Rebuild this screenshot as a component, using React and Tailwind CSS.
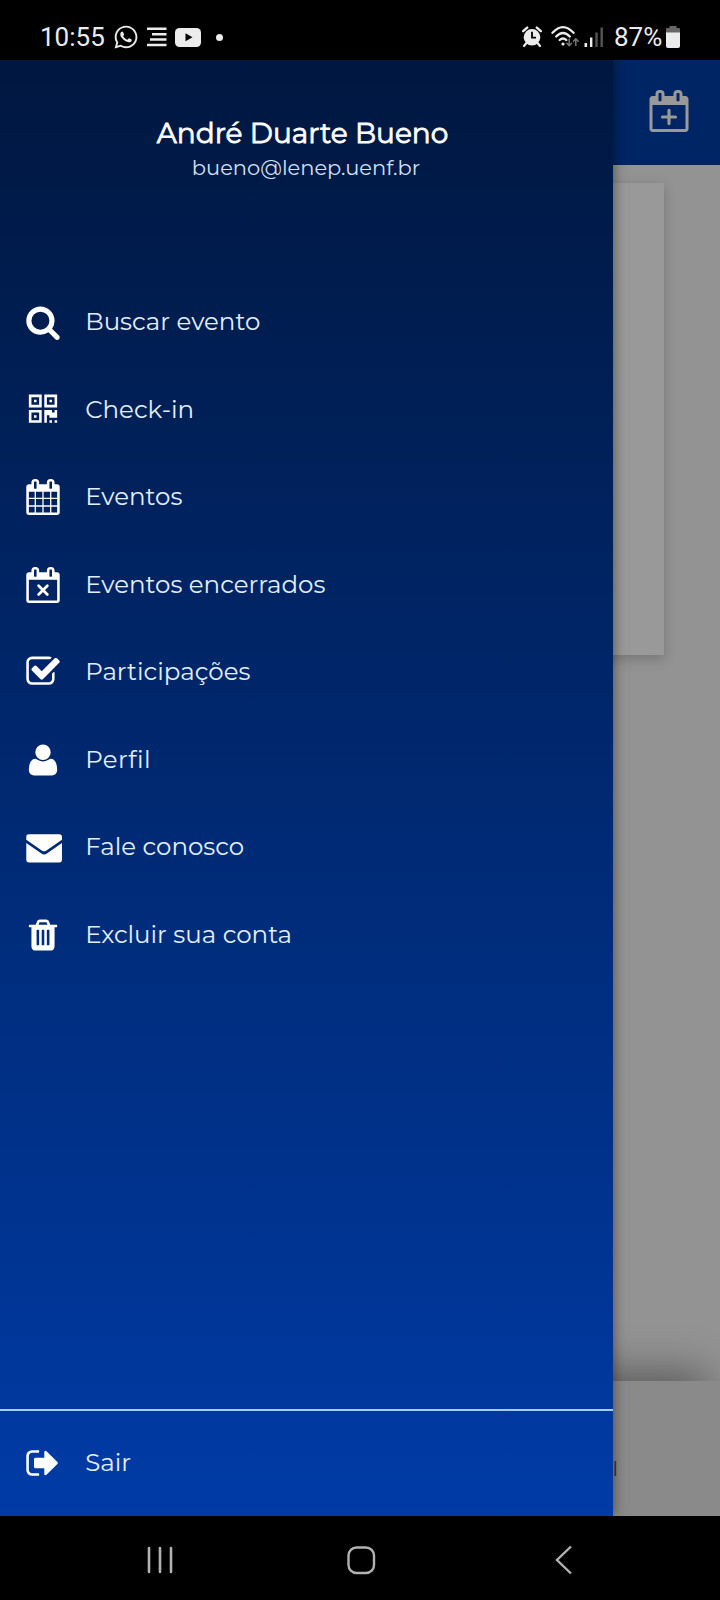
import React from "react";
import { FaWhatsapp } from "react-icons/fa";

const CALENDAR_TABS =
  "M576 448v-288q0-14-9-23t-23-9h-64q-14 0-23 9t-9 23v288q0 14 9 23t23 9h64q14 0 23-9t9-23zm768 0v-288q0-14-9-23t-23-9h-64q-14 0-23 9t-9 23v288q0 14 9 23t23 9h64q14 0 23-9t9-23z";
const CALENDAR_OUTER =
  "M1728 384v1280q0 52-38 90t-90 38h-1408q-52 0-90-38t-38-90v-1280q0-52 38-90t90-38h128v-96q0-66 47-113t113-47h64q66 0 113 47t47 113v96h384v-96q0-66 47-113t113-47h64q66 0 113 47t47 113v96h128q52 0 90 38t38 90z";
const CALENDAR_BODY = "M192 1664h1408v-1024h-1408z";
const CALENDAR_CELLS =
  "M192 640h288v288h-288zM544 640h320v288h-320zM928 640h320v288h-320zM1312 640h288v288h-288zM192 992h288v320h-288zM544 992h320v320h-320zM928 992h320v320h-320zM1312 992h288v320h-288zM192 1376h288v288h-288zM544 1376h320v288h-320zM928 1376h320v288h-320zM1312 1376h288v288h-288z";

const PATHS = {
  search:
    "M1216 832q0-185-131.5-316.5t-316.5-131.5-316.5 131.5-131.5 316.5 131.5 316.5 316.5 131.5 316.5-131.5 131.5-316.5zm512 832q0 52-38 90t-90 38q-54 0-90-38l-343-342q-179 124-399 124-143 0-273.5-55.5t-225-150-150-225-55.5-273.5 55.5-273.5 150-225 225-150 273.5-55.5 273.5 55.5 225 150 150 225 55.5 273.5q0 220-124 399l343 343q37 37 37 90z",
  qrcode:
    "M576 1152v128h-128v-128h128zm0-768v128h-128v-128h128zm768 0v128h-128v-128h128zm-1024 1023h384v-383h-384v383zm0-767h384v-384h-384v384zm768 0h384v-384h-384v384zm-256 256v640h-640v-640h640zm512 512v128h-128v-128h128zm256 0v128h-128v-128h128zm0-512v384h-384v-128h-128v384h-128v-640h384v128h128v-128h128zm-768-768v640h-640v-640h640zm768 0v640h-640v-640h640z",
  calendar: CALENDAR_OUTER + CALENDAR_CELLS + CALENDAR_TABS,
  calendarFrame: CALENDAR_OUTER + CALENDAR_BODY + CALENDAR_TABS,
  check:
    "M1472 930v318q0 119-84.5 203.5t-203.5 84.5h-832q-119 0-203.5-84.5t-84.5-203.5v-832q0-119 84.5-203.5t203.5-84.5h832q63 0 117 25 15 7 18 23 3 17-9 29l-49 49q-10 10-23 10-3 0-9-2-23-6-45-6h-832q-66 0-113 47t-47 113v832q0 66 47 113t113 47h832q66 0 113-47t47-113v-254q0-13 9-22l64-64q10-10 23-10 6 0 12 3 20 8 20 29zm231-489l-814 814q-24 24-57 24t-57-24l-430-430q-24-24-24-57t24-57l110-110q24-24 57-24t57 24l263 263 647-647q24-24 57-24t57 24l110 110q24 24 24 57t-24 57z",
  user:
    "M1600 1405q0 120-73 189.5t-194 69.5h-874q-121 0-194-69.5t-73-189.5q0-53 3.5-103.5t14-109 26.5-108.5 43-97.5 62-81 85.5-53.5 111.5-20q9 0 42 21.5t74.5 48 108 48 133.5 21.5 133.5-21.5 108-48 74.5-48 42-21.5q61 0 111.5 20t85.5 53.5 62 81 43 97.5 26.5 108.5 14 109 3.5 103.5zm-320-893q0 159-112.5 271.5t-271.5 112.5-271.5-112.5-112.5-271.5 112.5-271.5 271.5-112.5 271.5 112.5 112.5 271.5z",
  envelope:
    "M64 700L820 1225Q950 1315 1090 1225L1840 700V1536Q1840 1664 1712 1664H192Q64 1664 64 1536zM192 256H1712Q1840 256 1840 384V540L1050 1080Q950 1145 850 1080L64 540V384Q64 256 192 256z",
  trash:
    "M704 1376v-704q0-14-9-23t-23-9h-64q-14 0-23 9t-9 23v704q0 14 9 23t23 9h64q14 0 23-9t9-23zm256 0v-704q0-14-9-23t-23-9h-64q-14 0-23 9t-9 23v704q0 14 9 23t23 9h64q14 0 23-9t9-23zm256 0v-704q0-14-9-23t-23-9h-64q-14 0-23 9t-9 23v704q0 14 9 23t23 9h64q14 0 23-9t9-23zm-544-992h448l-48-117q-7-9-17-11h-317q-10 2-17 11zm928 32v64q0 14-9 23t-23 9h-96v948q0 83-47 143.5t-113 60.5h-832q-66 0-113-58.5t-47-141.5v-952h-96q-14 0-23-9t-9-23v-64q0-14 9-23t23-9h309l70-167q15-37 54-63t79-26h320q40 0 79 26t54 63l70 167h309q14 0 23 9t9 23z",
  signOut:
    "M704 1440q0 4 1 20t.5 26.5-3 23.5-10 19.5-20.5 6.5h-320q-119 0-203.5-84.5t-84.5-203.5v-704q0-119 84.5-203.5t203.5-84.5h320q13 0 22.5 9.5t9.5 22.5q0 4 1 20t.5 26.5-3 23.5-10 19.5-20.5 6.5h-320q-66 0-113 47t-47 113v704q0 66 47 113t113 47h312l11.5 1 11.5 3 8 5.5 7 9 2 13.5zm928-544q0 26-19 45l-544 544q-19 19-45 19t-45-19-19-45v-288h-448q-26 0-45-19t-19-45v-384q0-26 19-45t45-19h448v-288q0-26 19-45t45-19 45 19l544 544q19 19 19 45z",
};

function Icon({ d, mark, className = "size-9" }) {
  return (
    <svg viewBox="0 0 1792 1792" className={`shrink-0 overflow-visible ${className}`} fill="currentColor">
      <path d={d} fillRule="evenodd" />
      {mark && <path d={mark} fill="none" stroke="currentColor" strokeWidth="135" strokeLinecap="round" />}
    </svg>
  );
}

const ITEMS = [
  { label: "Buscar evento", icon: PATHS.search, cls: "h-[88px]" },
  { label: "Check-in", icon: PATHS.qrcode, cls: "h-[87px]" },
  { label: "Eventos", icon: PATHS.calendar, cls: "h-[88px]" },
  { label: "Eventos encerrados", icon: PATHS.calendarFrame, mark: "M678 936l436 436M1114 936l-436 436", cls: "h-[87px]" },
  { label: "Participações", icon: PATHS.check, cls: "h-[88px]" },
  { label: "Perfil", icon: PATHS.user, cls: "h-[87px] tracking-[0.4px]" },
  { label: "Fale conosco", icon: PATHS.envelope, cls: "h-[88px]" },
  { label: "Excluir sua conta", icon: PATHS.trash, cls: "h-[87px]" },
];

function MenuItem({ label, icon, mark, cls }) {
  return (
    <button className={`flex w-full items-start pt-[24px] pl-[25px] text-left ${cls}`}>
      <Icon d={icon} mark={mark} />
      <span className="ml-[24.2px] text-[24.5px] leading-[35px] text-[#e2effc]">{label}</span>
    </button>
  );
}

function StatusBar() {
  return (
    <header className="flex h-[60px] shrink-0 items-start bg-black pt-[22px] pl-[40px] font-[Roboto,sans-serif] text-[#ececec]">
      <span className="w-[73px] text-[26px] leading-[31px]">10:55</span>
      <FaWhatsapp className="mt-[2px] size-[26px]" />
      <svg className="mt-[5px] ml-[7px] h-5 w-[21px]" viewBox="0 0 21 20" fill="currentColor">
        <path d="M1 0.5h19.5v2.6H1zM6 6h14.5v2.5H6zM4 11.3h16.5v2.5H4zM1 16.7h19.5v2.6H1z" />
      </svg>
      <svg className="mt-[6px] ml-[8px] h-[19px] w-[26px]" viewBox="0 0 26 19">
        <rect width="26" height="19" rx="4.5" fill="#ececec" />
        <path d="M10.5 5.2v8l7-4z" fill="#000" />
      </svg>
      <span className="mt-3 ml-[15px] size-[7px] rounded-full bg-[#ececec]" />
      <div className="ml-auto flex items-start pr-[40px]">
        <svg className="mt-[4px] h-[22px] w-[20px]" viewBox="0 0 20 22" fill="none" stroke="#ececec">
          <circle cx="10" cy="11.3" r="8.3" fill="#ececec" stroke="none" />
          <path d="M1.2 5.2L5.2 1.6M18.8 5.2L14.8 1.6" strokeWidth="2.4" strokeLinecap="round" />
          <path d="M4 17.5L2 20M16 17.5L18 20" strokeWidth="2.2" strokeLinecap="round" />
          <path d="M10 5.8V11.6H14" stroke="#000" strokeWidth="1.8" />
        </svg>
        <svg className="mt-[3px] ml-[9px] h-[24px] w-[28px]" viewBox="0 0 28 24" fill="none" stroke="#ececec" strokeWidth="2.3" strokeLinecap="round">
          <path d="M1.5 7.8Q12 -3.5 22.5 7.8M5.2 11.5Q12 4.5 18.8 11.5M8.7 15Q12 12 15.3 15" />
          <circle cx="12" cy="19" r="1.6" fill="#ececec" stroke="none" />
          <path d="M18.2 14v6.5M15.8 18.2l2.4 2.4 2.4-2.4M24.8 20.5V14M22.4 16.2l2.4-2.4 2.4 2.4" stroke="#777" strokeWidth="1.5" />
        </svg>
        <svg className="mt-[5px] ml-[5px] h-5 w-[20px]" viewBox="0 0 20 20">
          <path d="M0.5 16h2.6v4H0.5zM6 10.5h2.4v9.5H6z" fill="#ececec" />
          <path d="M11.3 5.5h2.4V20h-2.4zM16.5 0.5h2.4V20h-2.4z" fill="#555" />
        </svg>
        <span className="ml-[10px] w-[52px] text-[26px] leading-[31px]">87%</span>
        <svg className="mt-[4px] h-[22px] w-[14px]" viewBox="0 0 14 22">
          <path d="M3.5 0h7v2H13a1 1 0 0 1 1 1v4H0V3a1 1 0 0 1 1-1h2.500z" fill="#666" />
          <path d="M0 6.500h14V20a2 2 0 0 1-2 2H2a2 2 0 0 1-2-2z" fill="#ececec" />
        </svg>
      </div>
    </header>
  );
}

function Drawer() {
  return (
    <aside className="absolute inset-y-0 left-0 flex w-[613px] flex-col bg-linear-to-b from-[#001740] to-[#003ba6] text-white shadow-[0_0_12px_rgba(0,0,0,0.5)]">
      <div className="flex h-[220px] flex-col items-center pt-[55px]">
        <h1 className="mr-2 text-[28px] leading-[36px] font-normal whitespace-nowrap [-webkit-text-stroke:0.8px_white]">André Duarte Bueno</h1>
        <p className="mt-px mr-px text-[21px] leading-[32px] text-[#d2e2f7]">bueno@lenep.uenf.br</p>
      </div>
      <nav className="flex flex-1 flex-col">
        {ITEMS.map((item) => (
          <MenuItem key={item.label} {...item} />
        ))}
      </nav>
      <div className="h-[107px] border-t-2 border-[#a5cbf7]">
        <MenuItem label="Sair" icon={PATHS.signOut} cls="mt-[10px] h-[88px]" />
      </div>
    </aside>
  );
}

function DimmedPage() {
  return (
    <div className="flex h-full flex-col bg-[#939393]">
      <div className="flex h-[105px] shrink-0 justify-end bg-[#002565] pt-[30px] pr-[30px] text-[#999]">
        <Icon d={PATHS.calendarFrame} mark="M616 1152h560M896 872v560" className="size-[42px]" />
      </div>
      <div className="mt-[18px] mr-[56px] h-[472px] shrink-0 bg-[#999] shadow-[0_4px_12px_rgba(0,0,0,0.2)]" />
      <div className="flex-1" />
      <div className="flex h-[135px] shrink-0 justify-end bg-[#8a8a8a] pt-[78px] pr-[102px] shadow-[-12px_-8px_40px_rgba(0,0,0,0.4)]">
        <span className="text-[20px] leading-none text-[#333]">l</span>
      </div>
    </div>
  );
}

function NavBar() {
  return (
    <footer className="flex h-[84px] shrink-0 items-start justify-between bg-black pt-[29px] pr-[146px] pl-[146px]">
      <svg className="h-[30px] w-7" viewBox="0 0 28 30" stroke="#b2b2b2" strokeWidth="2.6" strokeLinecap="round">
        <path d="M3 3v24M14 3v24M25 3v24" />
      </svg>
      <svg className="mr-[6px] size-[30px]" viewBox="0 0 30 30" fill="none" stroke="#b2b2b2" strokeWidth="2.4">
        <rect x="2.500" y="2.500" width="25.500" height="25.500" rx="8" />
      </svg>
      <svg className="h-[30px] w-[20px]" viewBox="0 0 20 30" fill="none" stroke="#b2b2b2" strokeWidth="2.4">
        <path d="M17 1.500L3 15l14 13.500" />
      </svg>
    </footer>
  );
}

export default function App() {
  return (
    <div className="flex h-[1600px] w-[720px] flex-col overflow-hidden bg-black font-[Montserrat,Inter,sans-serif]">
      <StatusBar />
      <main className="relative flex-1 overflow-hidden">
        <DimmedPage />
        <Drawer />
      </main>
      <NavBar />
    </div>
  );
}
